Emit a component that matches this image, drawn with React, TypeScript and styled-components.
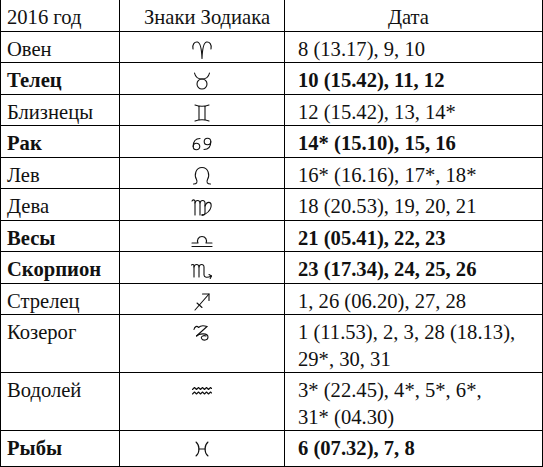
import React from 'react';
import styled, { createGlobalStyle } from 'styled-components';

const GlobalStyle = createGlobalStyle`
  body {
    margin: 0;
    background: #fff;
  }
`;

const Table = styled.div`
  display: grid;
  grid-template-columns: 119px 165px 258px;
  width: 543px;
  border-left: 1px solid #000;
  font-family: 'Liberation Serif', 'Times New Roman', serif;
  font-size: 20.6px;
  line-height: 26.5px;
  color: #111;
`;

const Cell = styled.div<{ $bold?: boolean; $last?: boolean }>`
  box-sizing: border-box;
  border-right: 1px solid #000;
  border-bottom: 1px solid #000;
  padding: 4px 6px ${(p) => (p.$last ? 4 : 0)}px 6px;
  font-weight: ${(p) => (p.$bold ? 700 : 400)};
  white-space: nowrap;
`;

const HeadCell = styled(Cell)<{ $shift?: number }>`
  text-align: ${(p) => (p.$shift !== undefined ? 'center' : 'left')};
  position: relative;
  left: 0;
  padding-left: ${(p) => 6 + Math.max(0, p.$shift ?? 0)}px;
  padding-right: ${(p) => 6 + Math.max(0, -(p.$shift ?? 0))}px;
`;

const SignCell = styled(Cell)`
  display: flex;
  justify-content: center;
  align-items: flex-start;
  padding-left: 0;
  padding-right: 0;
`;

const DateCell = styled(Cell)`
  padding-left: 13px;
`;

const Glyph = styled.svg`
  display: block;
  width: 26px;
  height: 22px;
  margin-top: 3px;
  fill: none;
  stroke: #111;
  stroke-width: 1.1;
  stroke-linecap: round;
  stroke-linejoin: round;
`;

const circle = (cx: number, cy: number, r: number) =>
  `M${cx - r} ${cy} a${r} ${r} 0 1 0 ${2 * r} 0 a${r} ${r} 0 1 0 ${-2 * r} 0`;

// zodiac glyphs, drawn in a 26x22 box
const glyphs: Record<string, string[]> = {
  aries: ['M4 10 C3 5.5 5.5 2.5 8.5 3 C11 3.5 12.5 7 13 19.5 C13.5 7 15 3.5 17.5 3 C20.5 2.5 23 5.5 22 10'],
  taurus: [circle(13, 14, 5), 'M5.5 3 C6.5 7.5 9.5 9 13 9 C16.5 9 19.5 7.5 20.5 3'],
  gemini: ['M6 3 Q13 5.5 20 3', 'M6 19 Q13 16.5 20 19', 'M10 4.3 V17.7', 'M16 4.3 V17.7'],
  cancer: [
    circle(7.5, 13.5, 3.3),
    'M4.2 13.5 C4.2 8.5 6.5 5.5 11 5.5',
    circle(18.5, 8.5, 3.3),
    'M21.8 8.5 C21.8 13.5 19.5 16.5 15 16.5',
  ],
  leo: ['M4.5 19 C7.5 19 9 17.5 7.5 14.5 C5 10 6.5 2.5 13 2.5 C19.5 2.5 21 10 18.5 14.5 C17 17.5 18.5 19 21.5 19'],
  virgo: [
    'M3 5 C4 3.5 5.5 3.5 6 5 V19',
    'M6 7 C6.5 4 11 3.5 11 7 V19',
    'M11 7 C11.5 4 16 3.5 16 7 V17 C16 19 14 19.5 13 18.5',
    'M16 10 C18 4.5 23 5.5 22 11 C21 15.5 17 18 13 19.5',
  ],
  libra: ['M3 15 H9 C7.5 12 9.5 8.5 13 8.5 C16.5 8.5 18.5 12 17 15 H23', 'M3 18.5 H23'],
  scorpio: [
    'M2.5 6 C3.5 5 5 5.5 5 7 V18',
    'M5 8 C5.5 5 10 4.5 10 8 V18',
    'M10 8 C10.5 5 15 4.5 15 8 V16 C15 18.5 18 19 22.5 17',
    'M20 15.6 L22.5 17 L21.2 19.4',
  ],
  sagittarius: ['M6 19 L20 3', 'M13.5 3 H20 V9.5', 'M8 12 L13 16.5'],
  capricorn: [
    'M5 7.5 C5.5 4.5 8 3.5 9.5 5.5 C11.5 3.5 15 3.5 18 4.5',
    'M18 4.5 L7.5 14',
    'M7.5 14 C10.5 11 19 11 19 15 C19 18.5 14 19 12.5 16.5 C11.5 14.5 14.5 13 17 14',
  ],
  aquarius: [
    'M3.5 9.5 L5.5 7.5 L7.5 9.5 L9.5 7.5 L11.5 9.5 L13.5 7.5 L15.5 9.5 L17.5 7.5 L19.5 9.5 L21.5 7.5 L22.5 8.5',
    'M3.5 14 L5.5 12 L7.5 14 L9.5 12 L11.5 14 L13.5 12 L15.5 14 L17.5 12 L19.5 14 L21.5 12 L22.5 13',
  ],
  pisces: ['M7 4 C11 7.5 11 14.5 7 18', 'M19 4 C15 7.5 15 14.5 19 18', 'M9.5 11 H16.5'],
};

const Sign = ({ name }: { name: string }) => (
  <Glyph viewBox="0 0 26 22">
    {glyphs[name].map((d, i) => (
      <path key={i} d={d} />
    ))}
  </Glyph>
);

type Row = { name: string; sign: string; dates: string[]; bold?: boolean };

const rows: Row[] = [
  { name: 'Овен', sign: 'aries', dates: ['8 (13.17), 9, 10'] },
  { name: 'Телец', sign: 'taurus', dates: ['10 (15.42), 11, 12'], bold: true },
  { name: 'Близнецы', sign: 'gemini', dates: ['12 (15.42), 13, 14*'] },
  { name: 'Рак', sign: 'cancer', dates: ['14* (15.10), 15, 16'], bold: true },
  { name: 'Лев', sign: 'leo', dates: ['16* (16.16), 17*, 18*'] },
  { name: 'Дева', sign: 'virgo', dates: ['18 (20.53), 19, 20, 21'] },
  { name: 'Весы', sign: 'libra', dates: ['21 (05.41), 22, 23'], bold: true },
  { name: 'Скорпион', sign: 'scorpio', dates: ['23 (17.34), 24, 25, 26'], bold: true },
  { name: 'Стрелец', sign: 'sagittarius', dates: ['1, 26 (06.20), 27, 28'] },
  { name: 'Козерог', sign: 'capricorn', dates: ['1 (11.53), 2, 3, 28 (18.13),', '29*, 30, 31'] },
  { name: 'Водолей', sign: 'aquarius', dates: ['3* (22.45), 4*, 5*, 6*,', '31* (04.30)'] },
  { name: 'Рыбы', sign: 'pisces', dates: ['6 (07.32), 7, 8'], bold: true },
];

const App = () => {
  return (
    <>
      <GlobalStyle />
      <Table>
        <HeadCell>2016 год</HeadCell>
        <HeadCell $shift={10}>Знаки Зодиака</HeadCell>
        <HeadCell $shift={-10}>Дата</HeadCell>
        {rows.map((r, i) => {
          const last = i === rows.length - 1;
          return (
            <React.Fragment key={r.name}>
              <Cell $bold={r.bold} $last={last}>
                {r.name}
              </Cell>
              <SignCell $last={last}>
                <Sign name={r.sign} />
              </SignCell>
              <DateCell $bold={r.bold} $last={last}>
                {r.dates.map((line, j) => (
                  <div key={j}>{line}</div>
                ))}
              </DateCell>
            </React.Fragment>
          );
        })}
      </Table>
    </>
  );
};

export default App;
